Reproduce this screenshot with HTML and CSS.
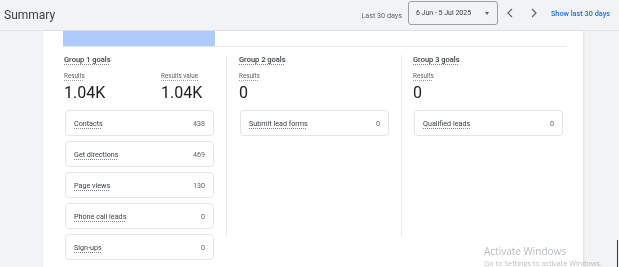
FILE: index.html
```html
<!DOCTYPE html>
<html lang="en">
<head>
  <meta charset="UTF-8">
  <meta name="viewport" content="width=device-width, initial-scale=1.0">
  <title>Summary</title>
  <link rel="stylesheet" href="styles.css">
</head>
<body>

  <!-- Header: title and date range -->
  <div class="header">
    <div class="title">Summary</div>
    <div class="controls">
      <span class="range-label">Last 30 days</span>
      <div class="date-box">
        <span>6 Jun - 5 Jul 2025</span>
        <span class="caret"></span>
      </div>
      <button type="button" class="nav-btn">
        <svg width="6" height="10" viewBox="0 0 6 10"><path d="M5 1 L1 5 L5 9" fill="none" stroke="#5f6368" stroke-width="1.2"/></svg>
      </button>
      <button type="button" class="nav-btn">
        <svg width="6" height="10" viewBox="0 0 6 10"><path d="M1 1 L5 5 L1 9" fill="none" stroke="#5f6368" stroke-width="1.2"/></svg>
      </button>
      <a class="show-link">Show last 30 days</a>
    </div>
  </div>

  <div class="main">
    <div class="gutter"></div>

    <div class="panel">
      <div class="chart">
        <div class="bar"></div>
      </div>

      <div class="groups">
        <!-- Group 1 -->
        <div class="group group-first">
          <div class="group-title">Group 1 goals</div>
          <div class="metrics">
            <div class="metric metric-wide">
              <div class="metric-label">Results</div>
              <div class="metric-value">1.04K</div>
            </div>
            <div class="metric">
              <div class="metric-label">Results value</div>
              <div class="metric-value">1.04K</div>
            </div>
          </div>
          <div class="goal-list">
            <div class="goal"><span class="goal-name">Contacts</span><span class="goal-count">438</span></div>
            <div class="goal"><span class="goal-name">Get directions</span><span class="goal-count">469</span></div>
            <div class="goal"><span class="goal-name">Page views</span><span class="goal-count">130</span></div>
            <div class="goal"><span class="goal-name">Phone call leads</span><span class="goal-count">0</span></div>
            <div class="goal"><span class="goal-name">Sign-ups</span><span class="goal-count">0</span></div>
          </div>
        </div>

        <!-- Group 2 -->
        <div class="group">
          <div class="group-title">Group 2 goals</div>
          <div class="metrics">
            <div class="metric">
              <div class="metric-label">Results</div>
              <div class="metric-value">0</div>
            </div>
          </div>
          <div class="goal-list">
            <div class="goal"><span class="goal-name">Submit lead forms</span><span class="goal-count">0</span></div>
          </div>
        </div>

        <!-- Group 3 -->
        <div class="group group-last">
          <div class="group-title">Group 3 goals</div>
          <div class="metrics">
            <div class="metric">
              <div class="metric-label">Results</div>
              <div class="metric-value">0</div>
            </div>
          </div>
          <div class="goal-list">
            <div class="goal"><span class="goal-name">Qualified leads</span><span class="goal-count">0</span></div>
          </div>
        </div>
      </div>
    </div>
  </div>

  <!-- Windows activation watermark -->
  <div class="watermark">
    <div class="wm-title">Activate Windows</div>
    <div class="wm-sub">Go to Settings to activate Windows.</div>
  </div>
  <div class="edge-line"></div>

</body>
</html>
```

FILE: styles.css
```css
body {
  font-family: Roboto, "Liberation Sans", Arial, sans-serif;
  margin: 0;
  padding: 0;
  height: 267px;
  overflow: hidden;
  background-color: #f1f3f4;
  color: #202124;
  -webkit-font-smoothing: antialiased;
}

.header {
  display: flex;
  align-items: center;
  height: 30px;
  border-bottom: 1px solid #e3e5e8;
  will-change: transform;
}

.title {
  padding-left: 4px;
  font-size: 12px;
  color: #3c4043;
}

.controls {
  margin-left: auto;
  display: flex;
  align-items: center;
  padding-right: 9px;
}

.range-label {
  font-size: 7.2px;
  color: #5f6368;
  margin-right: 6px;
}

.date-box {
  display: flex;
  align-items: center;
  justify-content: space-between;
  box-sizing: border-box;
  width: 90px;
  height: 24px;
  padding: 0 8px 0 7px;
  margin-top: -4px;
  border: 1px solid #9aa0a6;
  border-radius: 3px;
  font-size: 7px;
  color: #3c4043;
}

.caret {
  width: 0;
  height: 0;
  border-left: 2.5px solid transparent;
  border-right: 2.5px solid transparent;
  border-top: 3px solid #5f6368;
}

.nav-btn {
  width: 24px;
  height: 20px;
  padding: 0;
  margin-top: -4px;
  border: none;
  background: none;
  display: flex;
  align-items: center;
  justify-content: center;
}

.show-link {
  margin-left: 5px;
  margin-top: -4px;
  font-size: 7.3px;
  font-weight: 500;
  color: #1a73e8;
}

.main {
  display: flex;
}

.gutter {
  width: 43px;
}

.panel {
  width: 540px;
  height: 236px;
  background-color: #fff;
  box-shadow: 1px 0 2px rgba(0, 0, 0, 0.08);
  will-change: transform;
}

.chart {
  margin-left: 20px;
  width: 504px;
  height: 15px;
  border-bottom: 1px solid #e8eaed;
}

.bar {
  width: 152px;
  height: 15px;
  background-color: #aecbfa;
}

.groups {
  display: flex;
  margin-top: 8px;
  height: 181px;
}

.group {
  width: 150px;
  padding: 0 12px;
  border-right: 1px solid #e8eaed;
}

.group-first {
  padding-left: 21px;
}

.group-last {
  padding-left: 11px;
  border-right: none;
}

.group-title {
  font-size: 7.5px;
  font-weight: 500;
  line-height: 10px;
  color: #3c4043;
  text-decoration: underline dotted #80868b;
  text-underline-offset: 2px;
}

.metrics {
  display: flex;
  margin-top: 7px;
}

.metric-wide {
  width: 97px;
}

.metric-label {
  font-size: 6.3px;
  line-height: 9px;
  color: #5f6368;
  text-decoration: underline dotted #9aa0a6;
  text-underline-offset: 1.5px;
}

.metric-value {
  margin-top: 3px;
  font-size: 16px;
  line-height: 18px;
  color: #202124;
}

.goal-list {
  display: flex;
  flex-direction: column;
  gap: 5px;
  margin-top: 8px;
  padding-left: 1px;
}

.goal {
  display: flex;
  align-items: center;
  justify-content: space-between;
  box-sizing: border-box;
  height: 26px;
  padding: 0 8px 0 8px;
  border: 1px solid #e3e5e8;
  border-radius: 4px;
  font-size: 7.2px;
}

.goal-name {
  color: #3c4043;
  text-decoration: underline dotted #80868b;
  text-underline-offset: 2px;
}

.goal-count {
  color: #5f6368;
}

/* Overlay watermark */
.watermark {
  position: absolute;
  left: 484px;
  top: 245px;
  font-family: "Open Sans", "Noto Sans", sans-serif;
  color: #b9bcbf;
}

.wm-title {
  font-size: 10px;
  line-height: 13px;
}

.wm-sub {
  font-size: 7.2px;
  line-height: 10px;
}

.edge-line {
  position: absolute;
  left: 617px;
  top: 240px;
  width: 1px;
  height: 27px;
  background-color: #333;
}
```
